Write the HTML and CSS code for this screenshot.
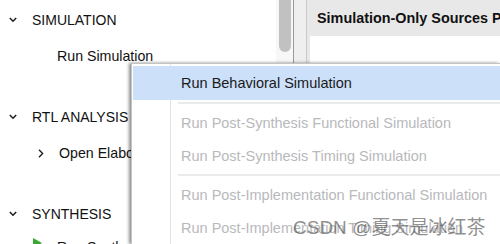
FILE: index.html
```html
<!DOCTYPE html>
<html>
<head>
<meta charset="utf-8">
<link rel="stylesheet" href="styles.css">
</head>
<body>
<div class="app">
  <div class="left">
    <div class="tree">
      <div class="section">
        <div class="row head"><svg class="chev" width="8" height="6" viewBox="0 0 8 6"><polyline points="0.8,1 4,4.2 7.2,1" fill="none" stroke="#222" stroke-width="1.6"/></svg><span>SIMULATION</span></div>
        <div class="row child"><span>Run Simulation</span></div>
      </div>
      <div class="section">
        <div class="row head"><svg class="chev" width="8" height="6" viewBox="0 0 8 6"><polyline points="0.8,1 4,4.2 7.2,1" fill="none" stroke="#222" stroke-width="1.6"/></svg><span>RTL ANALYSIS</span></div>
        <div class="row child sub"><svg class="rchev" width="6" height="9" viewBox="0 0 6 9"><polyline points="1,0.8 4.6,4.5 1,8.2" fill="none" stroke="#222" stroke-width="1.4"/></svg><span>Open Elaborated Design</span></div>
      </div>
      <div class="section">
        <div class="row head"><svg class="chev" width="8" height="6" viewBox="0 0 8 6"><polyline points="0.8,1 4,4.2 7.2,1" fill="none" stroke="#222" stroke-width="1.6"/></svg><span>SYNTHESIS</span></div>
        <div class="row child play"><svg class="tri" width="9" height="10" viewBox="0 0 9 10"><polygon points="0,0 9,5 0,10" fill="#3aa832"/></svg><span>Run Synthesis</span></div>
      </div>
    </div>
    <div class="scroll"><div class="thumb"></div></div>
  </div>
  <div class="divider"></div>
  <div class="right">
    <div class="rhead">Simulation-Only Sources Properties</div>
    <div class="rbody"></div>
  </div>
</div>

<div class="menu">
  <div class="item active">Run Behavioral Simulation</div>
  <div class="sep"></div>
  <div class="item dis">Run Post-Synthesis Functional Simulation</div>
  <div class="item dis">Run Post-Synthesis Timing Simulation</div>
  <div class="sep"></div>
  <div class="item dis">Run Post-Implementation Functional Simulation</div>
  <div class="item dis">Run Post-Implementation Timing Simulation</div>
</div>

<div class="watermark">CSDN @夏天是冰红茶</div>
</body>
</html>
```

FILE: styles.css
```css
html, body {
  margin: 0;
  padding: 0;
  width: 500px;
  height: 244px;
  overflow: hidden;
  background: #ffffff;
  font-family: "Liberation Sans", Arial, sans-serif;
  font-size: 14px;
  color: #111;
}

.app {
  display: grid;
  grid-template-columns: 294px 13px 193px;
  height: 244px;
  overflow: hidden;
}

.left {
  display: flex;
  background: #fff;
  border-right: 1px solid #9a9a9a;
  overflow: hidden;
}

.tree {
  width: 276px;
  padding-top: 2px;
  display: flex;
  flex-direction: column;
  gap: 25px;
  overflow: hidden;
}

.row {
  height: 36px;
  display: flex;
  align-items: center;
  white-space: nowrap;
}

.head {
  padding-left: 9px;
}

.head .chev {
  margin-right: 15px;
}

.child {
  padding-left: 57px;
  font-size: 14.2px;
}

.child.sub {
  padding-left: 38px;
}

.child.sub .rchev {
  margin-right: 15px;
}

.child.play {
  padding-left: 33px;
  align-items: flex-start;
}

.child.play .tri {
  margin-right: 15px;
  margin-top: 6px;
}

.child.play span {
  margin-top: 7px;
}

.scroll {
  width: 17px;
  background: #f7f7f7;
  padding-left: 3px;
  box-sizing: border-box;
}

.thumb {
  width: 12px;
  height: 52px;
  background: #c1c1c1;
  border-radius: 0 0 6px 6px;
}

.divider {
  background: #efefef;
  border-right: 1px solid #c9c9c9;
}

.right {
  display: flex;
  flex-direction: column;
  background: #e8e8e8;
  overflow: hidden;
}

.rhead {
  height: 36px;
  display: flex;
  align-items: center;
  padding-left: 10px;
  font-weight: bold;
  font-size: 14.4px;
  white-space: nowrap;
  overflow: hidden;
  color: #111;
}

.rbody {
  flex: 1;
  background: #fff;
  margin-left: 3px;
}

.menu {
  position: absolute;
  left: 131px;
  top: 63px;
  width: 369px;
  height: 181px;
  overflow: hidden;
  border: 1px solid #c4c4c4;
  border-right: none;
  border-bottom: none;
  padding: 2px 0 0 1px;
  background: linear-gradient(to right, #fff 38px, #e3e3e3 38px, #e3e3e3 39px, #fff 39px);
  box-shadow: -2px 0 3px rgba(0,0,0,0.45);
  box-sizing: border-box;
}

.item {
  height: 33px;
  display: flex;
  align-items: center;
  padding-left: 48px;
  white-space: nowrap;
  color: #1a1a1a;
  font-size: 14.5px;
}

.item.active {
  height: 34px;
  background: #cce0f9;
}

.item.dis {
  color: #b8b9bb;
}

.sep {
  height: 2px;
  margin: 2px 0 2px 45px;
  background: #ebebeb;
}

.watermark {
  position: absolute;
  left: 293px;
  top: 212px;
  font-family: "Liberation Sans", "Noto Sans CJK SC", sans-serif;
  font-size: 19px;
  color: rgba(80, 80, 80, 0.65);
  white-space: nowrap;
}
```
